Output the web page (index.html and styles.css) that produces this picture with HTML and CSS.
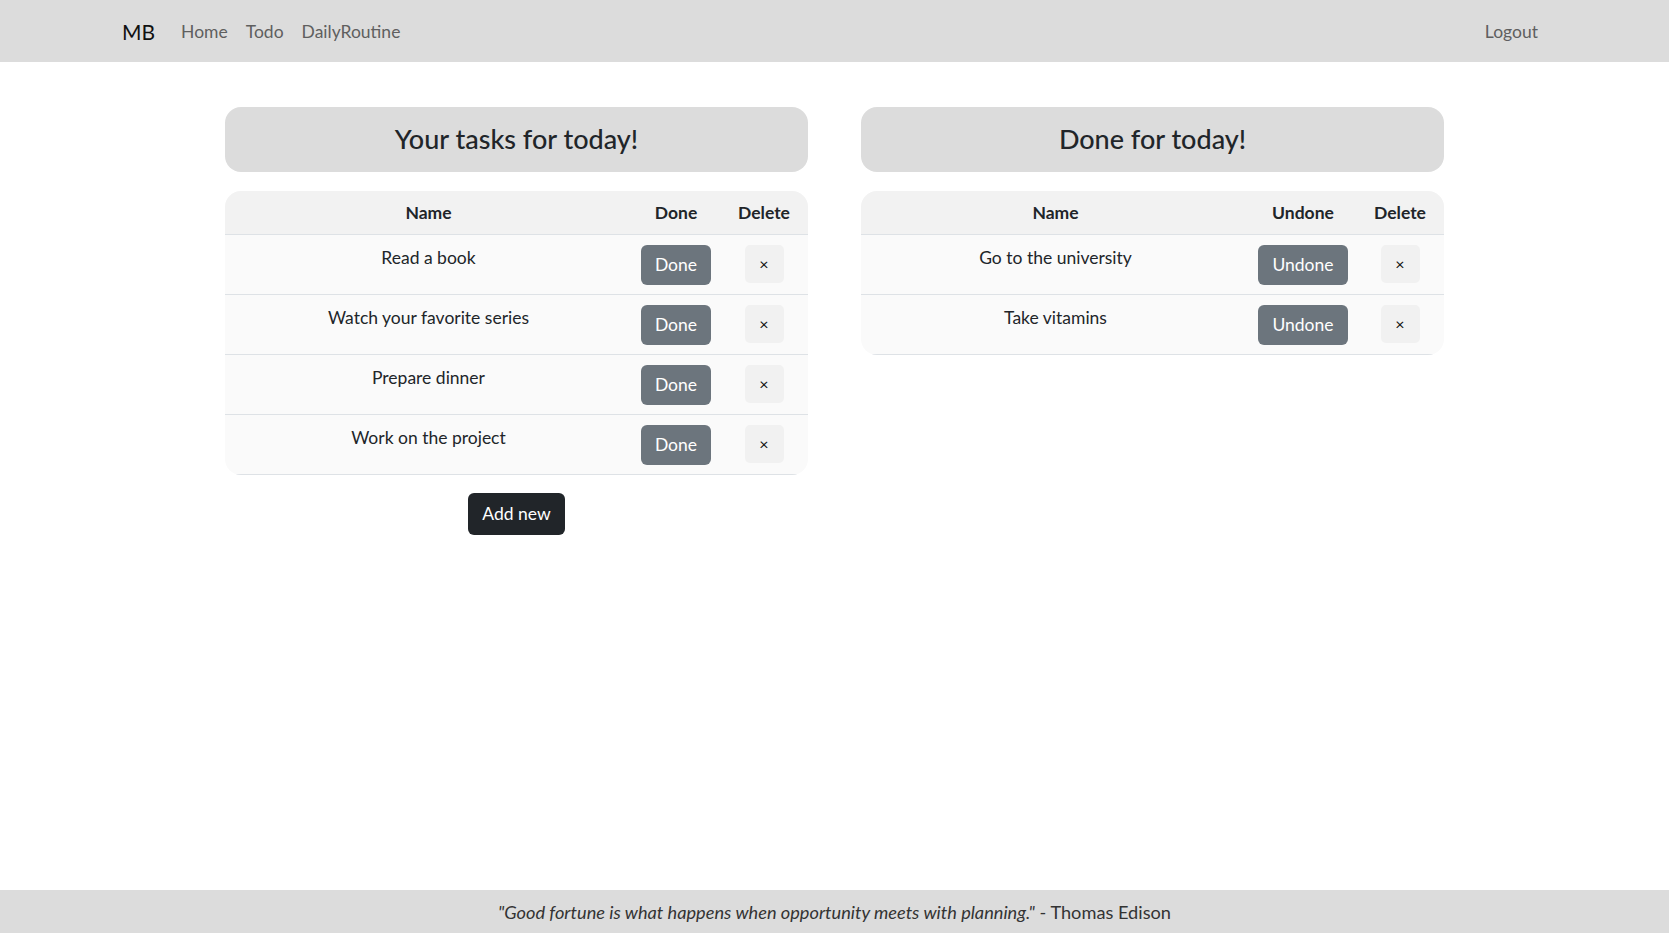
FILE: index.html
```html
<!DOCTYPE html>
<html lang="en">
<head>
<meta charset="utf-8">
<title>Todo</title>
<link rel="stylesheet" href="styles.css">
</head>
<body>
<div class="page">
  <nav class="navbar">
    <div class="nav-left">
      <a class="brand" href="#">MB</a>
      <a class="nav-link" href="#">Home</a>
      <a class="nav-link" href="#">Todo</a>
      <a class="nav-link" href="#">DailyRoutine</a>
    </div>
    <a class="nav-link" href="#">Logout</a>
  </nav>

  <main class="columns">
    <section class="column">
      <div class="heading-card"><h4>Your tasks for today!</h4></div>
      <table class="tasks">
        <thead>
          <tr><th class="col-name">Name</th><th class="col-done">Done</th><th class="col-del">Delete</th></tr>
        </thead>
        <tbody>
          <tr><td class="col-name">Read a book</td><td class="col-done"><button class="btn btn-secondary">Done</button></td><td class="col-del"><button class="btn btn-x">×</button></td></tr>
          <tr><td class="col-name">Watch your favorite series</td><td class="col-done"><button class="btn btn-secondary">Done</button></td><td class="col-del"><button class="btn btn-x">×</button></td></tr>
          <tr><td class="col-name">Prepare dinner</td><td class="col-done"><button class="btn btn-secondary">Done</button></td><td class="col-del"><button class="btn btn-x">×</button></td></tr>
          <tr><td class="col-name">Work on the project</td><td class="col-done"><button class="btn btn-secondary">Done</button></td><td class="col-del"><button class="btn btn-x">×</button></td></tr>
        </tbody>
      </table>
      <div class="add-row"><button class="btn btn-dark">Add new</button></div>
    </section>

    <section class="column">
      <div class="heading-card"><h4>Done for today!</h4></div>
      <table class="tasks">
        <thead>
          <tr><th class="col-name">Name</th><th class="col-undone">Undone</th><th class="col-del">Delete</th></tr>
        </thead>
        <tbody>
          <tr><td class="col-name">Go to the university</td><td class="col-undone"><button class="btn btn-secondary">Undone</button></td><td class="col-del"><button class="btn btn-x">×</button></td></tr>
          <tr><td class="col-name">Take vitamins</td><td class="col-undone"><button class="btn btn-secondary">Undone</button></td><td class="col-del"><button class="btn btn-x">×</button></td></tr>
        </tbody>
      </table>
    </section>
  </main>

  <footer class="footer">
    <p><em>"Good fortune is what happens when opportunity meets with planning."</em> - Thomas Edison</p>
  </footer>
</div>
</body>
</html>
```

FILE: styles.css
```css
* { box-sizing: border-box; }

html, body {
  margin: 0;
  padding: 0;
}

body {
  font-family: Lato, "Liberation Sans", sans-serif;
  font-size: 17.5px;
  line-height: 1.5;
  color: #212529;
  background: #ffffff;
}

.page {
  min-height: 100vh;
  display: flex;
  flex-direction: column;
}

/* Navbar */
.navbar {
  height: 62px;
  background: #dcdcdc;
  display: flex;
  align-items: center;
  justify-content: space-between;
  padding: 2px 131px 0 122px;
}

.nav-left {
  display: flex;
  align-items: center;
  gap: 18px;
}

.brand {
  font-size: 21px;
  color: #111;
  text-decoration: none;
  margin-right: 8px;
}

.nav-link {
  font-size: 17.5px;
  color: #5f5f5f;
  text-decoration: none;
}

/* Columns */
.columns {
  display: flex;
  justify-content: center;
  gap: 53px;
  padding-top: 45px;
}

.column {
  width: 583px;
  display: flex;
  flex-direction: column;
}

.heading-card {
  height: 65px;
  background: #dcdcdc;
  border-radius: 16px;
  display: flex;
  align-items: center;
  justify-content: center;
}

.heading-card h4 {
  margin: 0;
  font-size: 27px;
  font-weight: 500;
  line-height: 1.2;
}

/* Tables */
.tasks {
  margin-top: 19px;
  width: 100%;
  border-collapse: separate;
  border-spacing: 0;
  border-radius: 16px;
  overflow: hidden;
  background: #fafafa;
}

.tasks th {
  background: #f2f2f2;
  font-weight: 700;
  height: 44px;
  padding: 2px 8px 0;
  text-align: center;
  vertical-align: middle;
  border-bottom: 1px solid #dee2e6;
}

.tasks td {
  padding: 10px 8px 9px;
  text-align: center;
  vertical-align: top;
  border-bottom: 1px solid #dee2e6;
  font-weight: 400;
}

.col-done { width: 88px; }
.col-undone { width: 106px; }
.col-del { width: 88px; }

/* Buttons */
.btn {
  font-family: inherit;
  font-size: 17.5px;
  line-height: 1.5;
  border: 0;
  border-radius: 6px;
  cursor: pointer;
}

.btn-secondary {
  background: #6c757d;
  color: #ffffff;
  height: 40px;
  padding: 0 14px;
}

.btn-x {
  background: #f1f1f1;
  color: #111;
  width: 39px;
  height: 38px;
  padding: 0;
  font-size: 16px;
  border-radius: 5px;
}

.add-row {
  display: flex;
  justify-content: center;
  margin-top: 18px;
}

.btn-dark {
  background: #212529;
  color: #ffffff;
  height: 42px;
  padding: 0 14px;
}

/* Footer */
.footer {
  margin-top: auto;
  height: 43px;
  background: #dcdcdc;
  display: flex;
  align-items: center;
  justify-content: center;
}

.footer p {
  margin: 2px 0 0;
  font-size: 18.2px;
  color: #333;
}
```
